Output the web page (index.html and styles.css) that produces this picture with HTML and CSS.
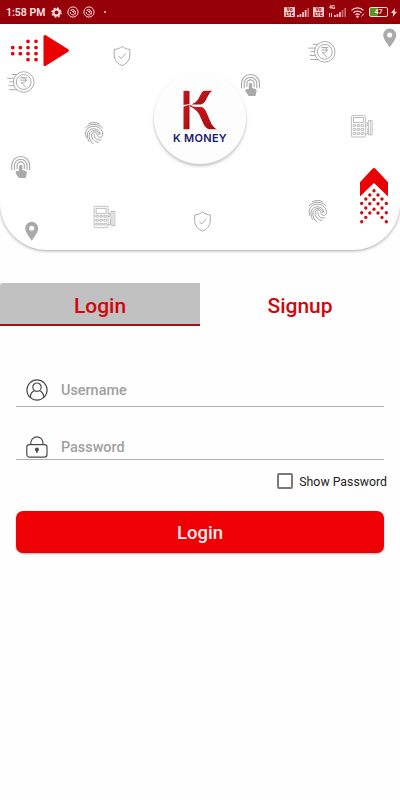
FILE: index.html
```html
<!DOCTYPE html>
<html lang="en">
<head>
<meta charset="UTF-8">
<meta name="viewport" content="width=device-width, initial-scale=1.0">
<title>K Money</title>
<link rel="stylesheet" href="styles.css">
</head>
<body>
<div class="status-bar">
    <div class="status-left">
        <span class="clock">1:58 PM</span>
        <svg class="status-gear" width="11" height="11" viewBox="0 0 11 11">
            <circle cx="5.5" cy="5.5" r="3" fill="none" stroke="#ffdede" stroke-width="2"/>
            <circle cx="5.5" cy="5.5" r="4.4" fill="none" stroke="#ffdede" stroke-width="1.6" stroke-dasharray="1.8 1.66"/>
        </svg>
        <svg class="status-ring" width="12" height="12" viewBox="0 0 12 12">
            <g fill="none" stroke="#ffd5d5">
                <circle cx="6" cy="6" r="5.1"/>
                <path d="M3.5 4.5a3 3 0 0 1 5 3M3.2 6a3 3 0 0 0 4.3 2.7M4 4l4.3 4.3M5.5 5.5h1.8"/>
            </g>
        </svg>
        <svg class="status-ring" width="12" height="12" viewBox="0 0 12 12">
            <g fill="none" stroke="#ffd5d5">
                <circle cx="6" cy="6" r="5.1"/>
                <path d="M3.5 4.5a3 3 0 0 1 5 3M3.2 6a3 3 0 0 0 4.3 2.7M4 4l4.3 4.3M5.5 5.5h1.8"/>
            </g>
        </svg>
        <span class="status-dot"></span>
    </div>
    <div class="status-right">
        <span class="volte"><span>Vo</span><span>LTE</span></span>
        <svg class="signal" width="12" height="9" viewBox="0 0 12 9" fill="#ffdede">
            <path d="M0 7h1.6v2H0zM2.6 6h1.6v3H2.6zM5.2 4h1.6v5H5.2zM7.8 2h1.6v7H7.8z"/>
            <path d="M10.4 0H12v9h-1.6z" opacity=".5"/>
        </svg>
        <span class="volte volte-second"><span>Vo</span><span>LTE</span></span>
        <span class="mobile-data">
            <span class="network">4G</span>
            <svg width="17" height="9" viewBox="0 0 17 9" fill="#ffdede">
                <path d="M0 5h1v4H0zM2 5h1v4H2zM5 7h1.6v2H5zM7.6 6h1.6v3H7.6zM10.2 4h1.6v5h-1.6z"/>
                <path d="M12.8 2h1.6v7h-1.6zM15.4 0H17v9h-1.6z" opacity=".5"/>
            </svg>
        </span>
        <svg class="wifi" width="14" height="11" viewBox="0 0 14 11">
            <g fill="none" stroke="#ffdede" stroke-width="1.3">
                <path d="M.5 3.4a8.5 8.5 0 0 1 12 0M2.5 5.8a5.6 5.6 0 0 1 8 0M4.4 7.9a3 3 0 0 1 4.2 0"/>
                <path d="M10.5 9.5l2.5-3" stroke-width="1"/>
            </g>
            <circle cx="6.5" cy="9.6" r="1.2" fill="#ffdede"/>
        </svg>
        <span class="battery"><span class="battery-text">47</span></span>
        <svg class="bolt" width="6" height="9" viewBox="0 0 6 9"><path d="M4 0L0 5h2.4L1.6 9 6 3.7H3.5z" fill="#ffdede"/></svg>
    </div>
</div>

<header class="hero">
    <svg class="hero-pattern" width="400" height="226" viewBox="0 24 400 226">
        <defs>
            <g id="coin" fill="none" stroke="#a3a3a3" stroke-width=".9">
                <circle r="10.3"/>
                <circle r="7.4"/>
                <path d="M-3.5-4.2h7M-3.5-1.8h7M-2.5-4.2h2.2c3.2 0 3.2 4.8 0 4.8h-2.4L2.2 5.2"/>
                <path d="M-12-7.5h5M-16.5-3.7h7M-14-.3h4M-15 3.7h5.5M-14.5 7.7h8"/>
            </g>
            <g id="shield" fill="none" stroke="#a0a0a0" stroke-width=".9">
                <path d="M0-9.6C-2-7.7-5-6.7-7.8-6.6V-1C-7.8 4.5-4 8 0 9.5 4 8 7.8 4.5 7.8-1V-6.6C5-6.7 2-7.7 0-9.6z"/>
                <path d="M-3.2.1l2.4 2.4L3.8-2.6"/>
            </g>
            <g id="finger" fill="none" stroke="#999" stroke-width=".9" stroke-linecap="round">
                <path d="M-5.2-9.6C-2-11.2 2-11.2 5.2-9.6M-8.6-5.4C-4-10.2 4-10.2 8.6-5.4"/>
                <path d="M-7.9 4C-10.6-4.6-4-7 0-7 5-7 8.8-3.5 8.8 1 8.8 5 3.6 5 3.3 1.5 3-2.2-2.5-2.2-2.5 1.8-2.5 5.8.5 8.6 4.2 9.2"/>
                <path d="M-5.3 8C-7 4-7 1-6 -1.2-4-6 5.5-6 6.2.8M-1 10.4C-4 8-5 5-4.7 1.2-4-4.3 5-4 5.2 1.4"/>
                <path d="M.3 1.2C.2 5 3 7.4 7 6.6"/>
            </g>
            <g id="touch">
                <path d="M-9 3.2V-1.5a9 9 0 0 1 18 0V3.2M-6.3 3.2V-1.5a6.3 6.3 0 0 1 12.6 0V3.2M-3.6 2V-1.5a3.6 3.6 0 0 1 7.2 0V2" fill="none" stroke="#a6a6a6" stroke-width="1.1"/>
                <path d="M-1.7 4V-.5a1.7 1.7 0 0 1 3.4 0V3L5 4Q6.4 4.6 6.1 6L5 11H-1.8L-5 6.5Q-5.5 4-3.5 4z" fill="#aaa"/>
            </g>
            <path id="pin" d="M0 9.5C-3 5-6.5 1-6.5-3a6.5 6.5 0 0 1 13 0C6.5 1 3 5 0 9.5zM0-5.6a2.5 2.5 0 1 0 0 5 2.5 2.5 0 0 0 0-5z" fill="#aaa" fill-rule="evenodd"/>
            <g id="terminal" fill="none" stroke="#b0b0b0" stroke-width=".8">
                <rect x="-10.4" y="-10.7" width="14" height="21.4" rx="1"/>
                <rect x="-8.4" y="-8.7" width="10" height="5"/>
                <path d="M-8.7-1.7h2.6v1.8h-2.6zM-4.7-1.7h2.6v1.8h-2.6zM-.7-1.7h2.6v1.8H-.7zM-8.7 2.3h2.6v1.8h-2.6zM-4.7 2.3h2.6v1.8h-2.6zM-.7 2.3h2.6v1.8H-.7zM-8.7 6.3h2.6v1.8h-2.6zM-4.7 6.3h2.6v1.8h-2.6zM-.7 6.3h2.6v1.8H-.7z"/>
                <path d="M3.6-3.5h2V-.5h-2M3.6 7.5H6V2M6.5-5.7h3.9V8.6H6.5zM8.5-5.7V8.6"/>
            </g>
        </defs>
        <use href="#coin" x="23.7" y="82"/>
        <use href="#coin" x="324.8" y="51.8"/>
        <use href="#shield" x="122" y="56"/>
        <use href="#shield" x="202.5" y="221.5"/>
        <use href="#finger" x="94" y="133.3"/>
        <use href="#finger" x="317.6" y="211.3"/>
        <use href="#touch" x="20.7" y="167"/>
        <use href="#touch" x="250.5" y="85"/>
        <use href="#pin" x="31.7" y="231.3"/>
        <use href="#pin" x="389.7" y="38"/>
        <use href="#terminal" x="104.5" y="217"/>
        <use href="#terminal" x="361.8" y="126.3"/>

        <path d="M45 36.4L67.4 50.5 45 64.6z" fill="#ea0003" stroke="#ea0003" stroke-width="3" stroke-linejoin="round"/>
        <g fill="none" stroke="#de0a12" stroke-width="3.8" stroke-linecap="round">
            <path d="M28 41.3h.01M36 41.3h.01M12.7 47.6h.01M20.3 47.6h.01M28 47.6h.01M36 47.6h.01"/>
            <path d="M12.7 53.7h.01M20.3 53.7h.01M28 53.7h.01M36 53.7h.01M28 59.6h.01M36 59.6h.01"/>
        </g>

        <path d="M372.5 168.7Q374 167.2 375.5 168.7L388 182.3V196.5L374 183 360 196.5V182.3z" fill="#ea0003"/>
        <g fill="none" stroke="#cf0b14" stroke-width="3.4" stroke-linecap="round">
            <path d="M374 190.7h.01M369.8 195h.01M378 195h.01M365.8 199h.01M374 199.5h.01M382 199h.01"/>
            <path d="M361.7 203.4h.01M369.8 203.8h.01M378 203.8h.01M386.3 203.4h.01M365.8 208h.01M374 209.3h.01M382 208h.01"/>
            <path d="M361.7 212.7h.01M369.8 213h.01M378 213h.01M386.3 212.7h.01M365.8 217.4h.01M382 217.4h.01M361.7 221.7h.01M386.3 221.7h.01"/>
        </g>
    </svg>
    <div class="logo">
        <svg width="36" height="40" viewBox="0 0 36 40">
            <defs>
                <linearGradient id="red" x1="0" y1="0" x2="1" y2="1">
                    <stop offset="0" stop-color="#d0171c"/>
                    <stop offset="1" stop-color="#a30c12"/>
                </linearGradient>
            </defs>
            <g fill="url(#red)">
                <path d="M1.5 1Q2.5.3 7.5 1V14L1.5 15z"/>
                <path d="M1.5 16.5L7.5 14.8V39.2H1.5z"/>
                <path d="M30.3.8H22Q20.5 1 19.5 3L16 9.5Q14 13 9.5 14.4H19Q21.8 14 23.2 11.3L26.5 5Q28 2 30.3.8z"/>
                <path d="M8 14.8Q10 16.5 13.5 17H19.5Q22.8 18 24.5 22.5L29 33Q31.5 38 35.2 39.3H27.5Q23.5 38.5 21.5 34L17 24Q13.5 18.5 8 16.5z"/>
            </g>
        </svg>
        <span class="logo-name">K MONEY</span>
    </div>
</header>

<nav class="tabs">
    <a href="#" class="tab active">Login</a>
    <a href="#" class="tab">Signup</a>
</nav>

<form class="login-form">
    <label class="field">
        <svg width="22" height="22" viewBox="0 0 22 22" fill="none" stroke="#4c4c4c" stroke-width="1.2">
            <circle cx="11" cy="11" r="10.1"/>
            <circle cx="11" cy="8.2" r="4.2"/>
            <path d="M4.2 18.5C4.5 14.5 6.2 12.4 8.8 11.7M17.8 18.5C17.5 14.5 15.8 12.4 13.2 11.7"/>
        </svg>
        <input type="text" placeholder="Username">
    </label>
    <label class="field field-password">
        <svg width="22" height="22" viewBox="0 0 22 22" fill="none" stroke="#4c4c4c" stroke-width="1.2">
            <rect x=".8" y="8.6" width="20.2" height="12.6" rx="2.6"/>
            <path d="M4.8 8.5V7a6.1 6.1 0 0 1 12.2 0v1.5"/>
            <path d="M10.9 14v3" stroke-width="1.4"/>
            <circle cx="10.9" cy="13.5" r="2" fill="#4c4c4c" stroke="none"/>
        </svg>
        <input type="password" placeholder="Password">
    </label>
    <label class="show-password">
        <input type="checkbox">
        <span>Show Password</span>
    </label>
    <button type="button" class="login-btn">Login</button>
</form>
</body>
</html>
```

FILE: styles.css
```css
* {
    box-sizing: border-box;
}

body {
    margin: 0;
    min-height: 100vh;
    font-family: Roboto, sans-serif;
    background: #fefefe;
}

svg {
    display: block;
    flex-shrink: 0;
}

.status-bar {
    display: flex;
    justify-content: space-between;
    height: 24px;
    padding: 0 3px 0 6px;
    background: #960009;
    color: #ffe3e3;
}

.status-left,
.status-right {
    display: flex;
    align-items: center;
}

.clock {
    width: 45px;
    font-size: 10.5px;
    font-weight: 600;
    white-space: nowrap;
}

.status-ring {
    margin-left: 4px;
}

.status-gear + .status-ring {
    margin-left: 5px;
}

.status-dot {
    width: 2px;
    height: 2px;
    margin-left: 9px;
    border-radius: 50%;
    background: #ffdede;
}

.volte {
    display: flex;
    flex-direction: column;
    align-items: center;
    width: 11px;
    height: 10px;
    margin-right: 2px;
    border-radius: 1px;
    background: #f3cdcd;
    color: #960009;
    font-size: 5px;
    font-weight: 700;
    line-height: 5px;
}

.volte-second {
    margin-left: 4px;
}

.mobile-data {
    position: relative;
    margin-left: 3px;
}

.network {
    position: absolute;
    top: -4px;
    left: 0;
    font-size: 5px;
    font-weight: 700;
    line-height: 6px;
}

.wifi {
    margin: 1px 4px 0 5px;
}

.battery {
    display: flex;
    align-items: center;
    justify-content: center;
    width: 19px;
    height: 10px;
    border: 1px solid #ffdede;
    border-radius: 2px;
    background: linear-gradient(90deg, #55951b 47%, #960009 47%);
}

.battery-text {
    font-size: 7px;
    font-weight: 700;
    line-height: 8px;
}

.bolt {
    margin-left: 3px;
}

.hero {
    position: relative;
    display: flex;
    justify-content: center;
    height: 226px;
    padding-top: 48px;
    border-radius: 0 0 47px 47px;
    background: #fff;
    box-shadow: 0 1px 3px rgba(0, 0, 0, 0.35);
}

.hero-pattern {
    position: absolute;
    top: 0;
    left: 0;
}

.logo {
    position: relative;
    display: flex;
    flex-direction: column;
    align-items: center;
    width: 92px;
    height: 92px;
    padding-top: 18px;
    border-radius: 50%;
    background: #fdfdfd;
    box-shadow: 0 2px 3px rgba(0, 0, 0, 0.25);
}

.logo-name {
    margin-top: 2px;
    color: #1a1a6b;
    font-family: Inter, sans-serif;
    font-size: 11px;
    font-weight: 600;
    line-height: 13px;
    letter-spacing: 0.3px;
    white-space: nowrap;
}

.tabs {
    display: flex;
    height: 43px;
    margin-top: 33px;
}

.tab {
    flex: 1;
    color: #d2060c;
    font-size: 21px;
    font-weight: 500;
    line-height: 47px;
    text-align: center;
    text-decoration: none;
}

.tab.active {
    border-bottom: 2px solid #a3101a;
    border-top-left-radius: 3px;
    background: #c1c1c1;
}

.login-form {
    display: flex;
    flex-direction: column;
    padding: 47px 16px 0;
}

.field {
    display: flex;
    align-items: center;
    height: 34px;
    padding: 1px 0 0 10px;
    border-bottom: 1px solid #b0b0b0;
}

.field input {
    flex: 1;
    min-width: 0;
    margin-left: 13px;
    padding: 1px 0 0;
    border: none;
    outline: none;
    background: none;
    color: #333;
    font-family: inherit;
    font-size: 14.4px;
    font-weight: 500;
}

.field input::placeholder {
    color: #a0a0a0;
}

.field-password {
    height: 30px;
    margin-top: 23px;
    padding-top: 4px;
}

.show-password {
    display: flex;
    align-items: center;
    align-self: flex-end;
    gap: 6px;
    height: 18px;
    margin: 12px -3px 0 0;
    color: #222;
    font-size: 12.3px;
}

.show-password span {
    padding-top: 1px;
}

.show-password input {
    appearance: none;
    width: 16px;
    height: 16px;
    margin: 0;
    border: 2px solid #7a7a7a;
    border-radius: 2px;
}

.login-btn {
    height: 42px;
    margin-top: 21px;
    padding-top: 3px;
    border: none;
    border-radius: 7px;
    background: #ee0004;
    box-shadow: 0 1px 2px rgba(0, 0, 0, 0.3);
    color: #ffecec;
    font-family: inherit;
    font-size: 18.5px;
    font-weight: 500;
}
```
